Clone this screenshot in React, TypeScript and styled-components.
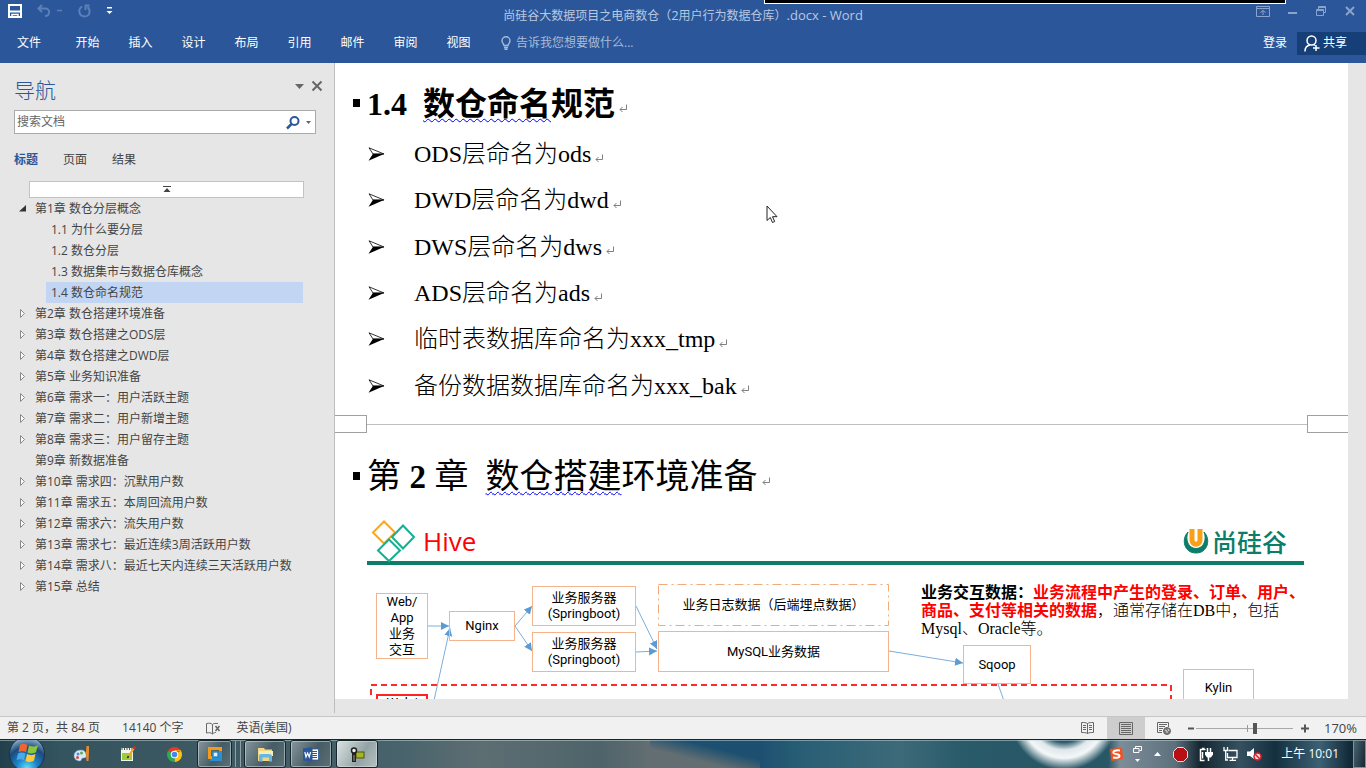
import React from "react";
import styled, { createGlobalStyle, css } from "styled-components";

const ui = `"Open Sans", "Noto Sans CJK SC", sans-serif`;
const serif = `"Liberation Serif", "Noto Sans CJK SC", serif`;
const blue = "#2b579a";

const GlobalStyle = createGlobalStyle`
  * { box-sizing: border-box; }
  html, body { margin: 0; height: 100%; overflow: hidden; }
  body { font: 12px/16px ${ui}; color: #444; background: #e6e6e6; }
  #root { height: 100%; }
  button { font: inherit; color: inherit; border: 0; padding: 0; background: none; display: flex; align-items: center; justify-content: center; white-space: nowrap; }
  a { color: inherit; text-decoration: none; }
  ul, h1, h2, p { margin: 0; padding: 0; list-style: none; font-weight: inherit; }
  svg { display: block; flex: none; overflow: visible; }
`;

const Window = styled.div`
  height: 100vh;
  display: flex;
  flex-direction: column;
  position: relative;
`;

/* ---------- title bar and ribbon tabs ---------- */
const Header = styled.header`
  background: ${blue};
  color: #fff;
  flex: none;
  height: 63px;
`;
const TitleBar = styled.div`
  display: grid;
  grid-template-columns: 1fr auto 1fr;
  align-items: center;
  height: 31px;
`;
const QuickAccess = styled.div`
  display: flex;
  align-items: center;
  height: 22px;
  align-self: start;
  padding-left: 8px;
  gap: 15px;
`;
const WindowTitle = styled.h1`
  color: #b9c8e0;
  font-size: 12px;
  span { font-size: 13px; }
`;
const WindowButtons = styled.div`
  display: flex;
  justify-content: flex-end;
  align-self: start;
  height: 22px;
  gap: 15px;
  padding-right: 9px;
  color: #8aa3ca;
  button { width: 14px; }
`;
const TabRow = styled.nav`
  display: flex;
  align-items: center;
  height: 24px;
`;
const RibbonTab = styled.button<{ $file?: boolean }>`
  width: ${(p) => (p.$file ? "58px" : "53px")};
  margin-right: ${(p) => (p.$file ? "3px" : "0")};
  height: 24px;
`;
const TellMe = styled.label`
  display: flex;
  align-items: center;
  gap: 5px;
  margin-left: 16px;
  color: #a9bbd9;
  input {
    width: 140px;
    border: 0;
    padding: 0;
    background: none;
    color: inherit;
    font: inherit;
    outline: 0;
  }
  input::placeholder { color: inherit; opacity: 1; }
`;
const Account = styled.div`
  display: flex;
  margin-left: auto;
  height: 23px;
`;
const SignIn = styled.button`
  padding-right: 10px;
`;
const Share = styled.button`
  background: #173f77;
  width: 69px;
  gap: 3px;
  padding-right: 12px;
`;
const RecorderEdge = styled.div`
  position: absolute;
  top: 0;
  right: 80px;
  width: 522px;
  height: 4px;
  background: #000;
  border: 1px solid #fff;
  border-top: 0;
`;

/* ---------- body ---------- */
const Body = styled.div`
  flex: 1;
  min-height: 0;
  display: flex;
  background: #e6e6e6;
  padding-bottom: 3px;
`;
const NavPane = styled.aside`
  width: 335px;
  flex: none;
  border-right: 1px solid #bdbdbd;
  padding-top: 13px;
`;
const PaneHead = styled.div`
  display: flex;
  align-items: flex-start;
  padding: 0 12px 0 14px;
  height: 34px;
  h2 { flex: 1; font-size: 21px; line-height: 28px; color: ${blue}; font-weight: 300; }
  button { height: 20px; margin-left: 8px; color: #666; }
`;
const SearchBox = styled.label`
  display: flex;
  align-items: center;
  margin: 0 18px 0 14px;
  height: 24px;
  padding: 0 4px 0 2px;
  background: #fff;
  border: 1px solid #ababab;
  gap: 6px;
  input {
    flex: 1;
    min-width: 0;
    border: 0;
    padding: 0;
    font: inherit;
    outline: 0;
    background: none;
  }
  input::placeholder { color: #666; opacity: 1; }
`;
const PaneTabs = styled.div`
  display: flex;
  gap: 25px;
  padding: 17px 14px 13px;
`;
const PaneTab = styled.button<{ $active?: boolean }>`
  line-height: 17px;
  color: ${(p) => (p.$active ? blue : "#444")};
  font-weight: ${(p) => (p.$active ? 700 : 400)};
`;
const JumpTop = styled.button`
  width: 275px;
  height: 17px;
  margin-left: 29px;
  background: #fff;
  border: 1px solid #c3c3c3;
`;
const Outline = styled.ul`
  width: 303px;
`;
const OutlineItem = styled.a<{ $child?: boolean; $active?: boolean }>`
  display: flex;
  align-items: center;
  height: 21px;
  margin-left: ${(p) => (p.$child ? "46px" : "19px")};
  padding-left: ${(p) => (p.$child ? "5px" : "0")};
  background: ${(p) => (p.$active ? "#c2d5f2" : "none")};
  white-space: nowrap;
`;
const Twist = styled.span`
  width: 16px;
  flex: none;
`;

/* ---------- document ---------- */
const DocArea = styled.main`
  flex: 1;
  min-width: 0;
  padding: 0 18px 14px 0;
  display: flex;
`;
const Page = styled.article`
  flex: 1;
  min-width: 0;
  overflow: hidden;
  background: #fff;
  color: #000;
  padding-top: 18px;
`;
const DocHeading = styled.h2<{ $chapter?: boolean }>`
  display: flex;
  align-items: center;
  padding-left: 18px;
  white-space: pre;
  font-family: ${serif};
  font-size: ${(p) => (p.$chapter ? "34px" : "32px")};
  line-height: ${(p) => (p.$chapter ? "50px" : "46px")};
  font-weight: ${(p) => (p.$chapter ? 400 : 700)};
  margin-top: ${(p) => (p.$chapter ? "19px" : "0")};
  b { font-size: 33px; }
`;
const Square = styled.span`
  width: 7px;
  height: 8px;
  margin: 0 7px 2px 0;
  background: #000;
`;
const Wavy = styled.span`
  text-decoration: underline wavy #00f 1px;
  text-decoration-skip-ink: none;
  text-underline-offset: 3px;
`;
const BulletList = styled.ul`
  display: flex;
  flex-direction: column;
  height: 278px;
  margin-top: 4px;
  padding-left: 33px;
  font: 300 24px/46px ${serif};
  li {
    flex: 1;
    display: flex;
    align-items: center;
    white-space: nowrap;
  }
  li > svg:first-child { margin-right: 29px; }
`;
const Mark = styled.svg`
  margin: 8px 0 0 4px;
`;
const PageBreak = styled.div`
  display: flex;
  align-items: center;
  margin-top: 6px;
`;
const Corner = styled.span<{ $right?: boolean }>`
  width: ${(p) => (p.$right ? "41px" : "32px")};
  height: 18px;
  border: 1px solid #a0a0a0;
  ${(p) => (p.$right ? "border-right: 0;" : "border-left: 0;")}
`;
const Rule = styled.span`
  flex: 1;
  height: 1px;
  background: #c0c0c0;
`;

/* ---------- embedded slide ---------- */
const Slide = styled.section`
  margin: 15px 0 0 32px;
  width: 937px;
  font-size: 13px;
`;
const SlideHead = styled.div`
  display: flex;
  align-items: center;
  height: 48px;
  border-bottom: 4px solid #0b7d68;
  padding: 3px 17px 0 5px;
  h2 { flex: 1; margin-left: 8px; font: 400 26px/40px "Open Sans", sans-serif; color: #f00; }
`;
const Brand = styled.div`
  display: flex;
  align-items: center;
  gap: 3px;
  color: #0b7d68;
  font: 500 25px/30px "Noto Sans CJK SC", sans-serif;
`;
const Canvas = styled.div`
  position: relative;
  height: 150px;
  > svg { position: absolute; left: 0; top: 0; }
`;
const Node = styled.div<{ $x: number; $y: number; $w: number; $h: number; $kind?: "log" | "red" }>`
  position: absolute;
  left: ${(p) => p.$x}px;
  top: ${(p) => p.$y}px;
  width: ${(p) => p.$w}px;
  height: ${(p) => p.$h}px;
  display: flex;
  align-items: center;
  justify-content: center;
  text-align: center;
  line-height: 16px;
  font-family: Roboto, "Noto Sans CJK SC", sans-serif;
  white-space: pre;
  border: 1px solid #f6b48c;
  ${(p) => p.$kind === "log" && css`border-color: transparent;`}
  ${(p) => p.$kind === "red" && css`border: 2px solid #f22; align-items: flex-start; line-height: 14px;`}
`;
const Note = styled.p`
  position: absolute;
  left: 554px;
  top: 19px;
  font: 300 16px/18px ${serif};
  white-space: nowrap;
  strong { font-weight: 700; }
  em { font-style: normal; font-weight: 700; color: #f00; }
`;
const Pointer = styled.svg`
  position: absolute;
  left: 766px;
  top: 205px;
`;

/* ---------- status bar ---------- */
const StatusBar = styled.footer`
  flex: none;
  height: 23px;
  display: flex;
  align-items: center;
  padding-left: 7px;
  background: #f1f1f1;
  border-top: 1px solid #c6c6c6;
  font-size: 12px;
  white-space: pre;
`;
const StatusItem = styled.button<{ $icon?: boolean }>`
  margin-right: ${(p) => (p.$icon ? "16px" : "22px")};
`;
const ViewControls = styled.div`
  display: flex;
  align-items: center;
  height: 100%;
  margin-left: auto;
  padding-right: 9px;
`;
const ViewButton = styled.button<{ $active?: boolean }>`
  width: 38px;
  height: 100%;
  background: ${(p) => (p.$active ? "#cdcdcd" : "none")};
`;
const ZoomSlider = styled.input`
  appearance: none;
  width: 97px;
  height: 12px;
  margin: 0 8px 0 1px;
  background:
    linear-gradient(#999, #999) 51px 50% / 1px 7px no-repeat,
    linear-gradient(#a8a8a8, #a8a8a8) 0 50% / 100% 1px no-repeat;
  &::-webkit-slider-thumb {
    appearance: none;
    width: 4px;
    height: 11px;
    background: #555;
  }
`;
const ZoomValue = styled.button`
  margin-left: 15px;
  font-size: 13px;
`;

/* ---------- taskbar ---------- */
const Taskbar = styled.div`
  flex: none;
  height: 29px;
  display: flex;
  align-items: center;
  overflow: hidden;
  border-top: 1px solid #16262f;
  box-shadow: inset 0 1px 0 rgba(200, 220, 225, 0.5);
  background:
    linear-gradient(90deg, transparent 1108px, #7b8d98 1120px, #5d717d 1175px, #14262f 1200px, #35505f 1240px, #14303f 1275px, #3c6074 1320px, #122a38 1350px),
    radial-gradient(circle at 1064px -24px, transparent 26px, #dfe8ec 34px, #f4f7f8 42px, transparent 54px),
    linear-gradient(to top right, #626e72 35%, #1d5070 65%) 650px 0 / 110px 100% no-repeat,
    linear-gradient(90deg, #22404c 0, #34545f 60px, #3f5a63 240px, #48636c 400px, #5d6e72 480px, #4e646a 600px, #626e72 650px, #1d5070 760px, #285e75 800px, #3d6a79 900px, #2a5b6a 960px, #285766 1040px);
`;
const StartButton = styled.button`
  width: 54px;
  margin-right: 5px;
`;
const TaskButton = styled.button<{ $framed?: boolean; $active?: boolean; $narrow?: boolean }>`
  width: ${(p) => (p.$framed ? (p.$narrow ? "35px" : "42px") : "46px")};
  height: 28px;
  ${(p) =>
    p.$framed &&
    css`
      border: 1px solid #16262d;
      border-radius: 3px;
      box-shadow: inset 0 0 0 1px rgba(220, 232, 235, 0.5);
      margin-right: 4px;
      background: ${p.$active ? "linear-gradient(120deg, #dbe3e3, #93a3a4 60%, #b5c1c1)" : "linear-gradient(120deg, #87989d, #465c64 55%, #5b7077)"};
    `}
`;
const StackEdge = styled.span`
  width: 6px;
  height: 26px;
  margin: 0 3px 0 -1px;
  border-left: 1px solid #8fa0a6;
  border-right: 1px solid #8fa0a6;
`;
const Tray = styled.div`
  display: flex;
  align-items: center;
  margin-left: auto;
  height: 100%;
  color: #fff;
`;
const TrayButton = styled.button<{ $w?: number }>`
  width: ${(p) => p.$w ?? 24}px;
`;
const Clock = styled.span`
  margin: 0 14px 0 15px;
  font-size: 12px;
`;
const ShowDesktop = styled.button`
  width: 13px;
  height: 100%;
  border: 1px solid #7d929c;
  background: linear-gradient(100deg, #4a6470, #142833);
`;

const ReturnMark = () => (
  <Mark width="9" height="9" viewBox="0 0 9 9" fill="none" stroke="#808080">
    <path d="M7.5 0.5V5.5H1M3.5 3L1 5.5L3.5 8" />
  </Mark>
);

const outline: { t: string; k?: "open" | "closed" | "leaf" | "child"; on?: boolean }[] = [
  { t: "第1章 数仓分层概念", k: "open" },
  { t: "1.1 为什么要分层", k: "child" },
  { t: "1.2 数仓分层", k: "child" },
  { t: "1.3 数据集市与数据仓库概念", k: "child" },
  { t: "1.4 数仓命名规范", k: "child", on: true },
  { t: "第2章 数仓搭建环境准备" },
  { t: "第3章 数仓搭建之ODS层" },
  { t: "第4章 数仓搭建之DWD层" },
  { t: "第5章 业务知识准备" },
  { t: "第6章 需求一：用户活跃主题" },
  { t: "第7章 需求二：用户新增主题" },
  { t: "第8章 需求三：用户留存主题" },
  { t: "第9章 新数据准备", k: "leaf" },
  { t: "第10章 需求四：沉默用户数" },
  { t: "第11章 需求五：本周回流用户数" },
  { t: "第12章 需求六：流失用户数" },
  { t: "第13章 需求七：最近连续3周活跃用户数" },
  { t: "第14章 需求八：最近七天内连续三天活跃用户数" },
  { t: "第15章 总结" },
];

const rules = [
  "ODS层命名为ods",
  "DWD层命名为dwd",
  "DWS层命名为dws",
  "ADS层命名为ads",
  "临时表数据库命名为xxx_tmp",
  "备份数据数据库命名为xxx_bak",
];

const arrows: [number, number, number, number][] = [
  [61, 61, 82, 61],
  [66, 140, 83, 63],
  [148, 61, 165, 41],
  [148, 61, 165, 86],
  [269, 41, 290, 84],
  [269, 87, 290, 86],
  [522, 86, 596, 98],
  [631, 119, 642, 150],
];

export default function App() {
  return (
    <Window>
      <GlobalStyle />
      <Header>
        <TitleBar>
          <QuickAccess>
            <button aria-label="保存">
              <svg width="14" height="14" viewBox="0 0 14 14" fill="none" stroke="#fff" strokeWidth="2">
                <path d="M1 1H13V13H1ZM1 7.5H13" />
                <path d="M4 13V10.500H10V13" strokeWidth="1.500" />
              </svg>
            </button>
            <button aria-label="撤消">
              <svg width="26" height="14" viewBox="0 0 26 14" fill="none" stroke="#5c7fb6" strokeWidth="2">
                <path d="M5 1L1.500 4.500L5 8M2 4.500H8C14 4.500 13 12 8 12" />
                <path d="M20 6.500H25" strokeWidth="1.500" />
              </svg>
            </button>
            <button aria-label="恢复">
              <svg width="13" height="14" viewBox="0 0 13 14" fill="none" stroke="#5c7fb6" strokeWidth="2">
                <path d="M4 2.500C-1 6 1.500 12.500 6.500 12.500C12 12.500 13 6 9.500 3M7 1.500H11.500M7.500 1V6" />
              </svg>
            </button>
            <button aria-label="自定义快速访问工具栏">
              <svg width="7" height="8" viewBox="0 0 7 8" fill="#fff">
                <path d="M1 0H6V1.500H1ZM0.500 4H6.500L3.500 7Z" />
              </svg>
            </button>
          </QuickAccess>
          <WindowTitle>
            尚硅谷大数据项目之电商数仓（<span>2</span>用户行为数据仓库）<span>.docx - Word</span>
          </WindowTitle>
          <WindowButtons>
            <button aria-label="功能区显示选项">
              <svg width="14" height="11" viewBox="0 0 14 11" fill="none" stroke="currentColor">
                <path d="M0.500 0.500H13.500V10.500H0.500ZM0.500 2.500H13.500M7 9V4.500M4.500 6.500L7 4.500L9.500 6.500" />
              </svg>
            </button>
            <button aria-label="最小化">
              <svg width="9" height="6" viewBox="0 0 9 6"><path d="M0 5H9" stroke="currentColor" strokeWidth="2" /></svg>
            </button>
            <button aria-label="还原">
              <svg width="10" height="10" viewBox="0 0 10 10" fill="none" stroke="currentColor">
                <path d="M0.500 3.500H7.500V9.500H0.500ZM0.500 4.500H7.500M2.500 3V0.500H9.500V6.500H8M2.500 1.500H9.500" />
              </svg>
            </button>
            <button aria-label="关闭">
              <svg width="10" height="10" viewBox="0 0 10 10"><path d="M1 1L9 9M9 1L1 9" stroke="currentColor" strokeWidth="2" /></svg>
            </button>
          </WindowButtons>
        </TitleBar>
        <TabRow>
          <RibbonTab $file>文件</RibbonTab>
          {["开始", "插入", "设计", "布局", "引用", "邮件", "审阅", "视图"].map((t) => (
            <RibbonTab key={t}>{t}</RibbonTab>
          ))}
          <TellMe>
            <svg width="10" height="14" viewBox="0 0 10 14" fill="none" stroke="currentColor" strokeWidth="1.4">
              <path d="M3 9.500C3 8 1 7 1 4.700A4 4 0 0 1 9 4.700C9 7 7 8 7 9.500ZM3 11.500H7M3.500 13.300H6.500" />
            </svg>
            <input aria-label="告诉我您想要做什么" placeholder="告诉我您想要做什么..." />
          </TellMe>
          <Account>
            <SignIn>登录</SignIn>
            <Share>
              <svg width="16" height="17" viewBox="0 0 16 17" fill="none" stroke="#fff" strokeWidth="1.500">
                <circle cx="7.500" cy="5.500" r="4.500" />
                <path d="M1 16.500C1 12.500 3 10.500 6 10M9.500 9.500L11 10.500M12 10V16M9 13H15.500" />
              </svg>
              共享
            </Share>
          </Account>
        </TabRow>
      </Header>

      <Body>
        <NavPane>
          <PaneHead>
            <h2>导航</h2>
            <button aria-label="任务窗格选项">
              <svg width="9" height="5" viewBox="0 0 9 5"><path d="M0 0H9L4.500 5Z" fill="currentColor" /></svg>
            </button>
            <button aria-label="关闭导航">
              <svg width="10" height="10" viewBox="0 0 10 10"><path d="M0.500 0.500L9.500 9.500M9.500 0.500L0.500 9.500" stroke="currentColor" strokeWidth="2" /></svg>
            </button>
          </PaneHead>
          <SearchBox>
            <input aria-label="搜索文档" placeholder="搜索文档" />
            <svg width="14" height="13" viewBox="0 0 14 13" fill="none" stroke={blue} strokeWidth="2">
              <circle cx="8.500" cy="5" r="4" />
              <path d="M5.500 8L1 12.500" strokeWidth="2.500" />
            </svg>
            <svg width="5" height="3" viewBox="0 0 5 3"><path d="M0 0H5L2.500 3Z" fill="#666" /></svg>
          </SearchBox>
          <PaneTabs>
            <PaneTab $active>标题</PaneTab>
            <PaneTab>页面</PaneTab>
            <PaneTab>结果</PaneTab>
          </PaneTabs>
          <JumpTop aria-label="跳转到开头">
            <svg width="8" height="7" viewBox="0 0 8 7" fill="#444"><path d="M0 0H8V1H0ZM4 2L7.500 6H0.500Z" /></svg>
          </JumpTop>
          <Outline>
            {outline.map(({ t, k = "closed", on }) => (
              <li key={t}>
                <OutlineItem href="#" $child={k === "child"} $active={on}>
                  {k !== "child" && (
                    <Twist>
                      {k === "open" && <svg width="7" height="7" viewBox="0 0 7 7"><path d="M7 0V6.500H0Z" fill="#333" /></svg>}
                      {k === "closed" && <svg width="7" height="9" viewBox="0 0 7 9"><path d="M1.500 0.500L5.500 4.500L1.500 8.500Z" fill="#fafafa" stroke="#8a8a8a" /></svg>}
                    </Twist>
                  )}
                  {t}
                </OutlineItem>
              </li>
            ))}
          </Outline>
        </NavPane>

        <DocArea>
          <Page>
            <DocHeading>
              <Square />
              {"1.4  "}
              <Wavy>数仓命名</Wavy>规范
              <ReturnMark />
            </DocHeading>
            <BulletList>
              {rules.map((t) => (
                <li key={t}>
                  <svg width="17" height="14" viewBox="0 0 17 14">
                    <path d="M1 0.800L16 7L5 7Z" fill="#fff" stroke="#000" strokeWidth="0.800" />
                    <path d="M16.500 6.800L0.500 13.800L5 6.800Z" fill="#000" />
                  </svg>
                  {t}
                  <ReturnMark />
                </li>
              ))}
            </BulletList>
            <PageBreak>
              <Corner />
              <Rule />
              <Corner $right />
            </PageBreak>
            <DocHeading $chapter>
              <Square />
              第 <b>2</b> 章{"  "}
              <Wavy>数仓搭建</Wavy>环境准备
              <ReturnMark />
            </DocHeading>

            <Slide>
              <SlideHead>
                <svg width="43" height="42" viewBox="0 0 43 42" fill="none" strokeWidth="2">
                  <path d="M12 1.500L23 12.500L12 23.500L1 12.500Z" stroke="#fba51b" />
                  <path d="M31 5.500L42 17L31 28.500L20 17Z" stroke="#12b094" fill="#fff" />
                  <path d="M17 19.500L28 30.500L17 41L6 30.500Z" stroke="#12b094" fill="#fff" />
                </svg>
                <h2>Hive</h2>
                <Brand>
                  <svg width="26" height="26" viewBox="0 0 26 26" fill="none">
                    <path d="M5 4C-2 11 1 25 13 25S28 11 21 4C24 11 21 20.500 13 20.500S2 11 5 4Z" fill="#0b7d68" stroke="#0b7d68" />
                    <path d="M9 1V12C9 17.500 17 17.500 17 12V1" stroke="#f9a01b" strokeWidth="5" />
                  </svg>
                  尚硅谷
                </Brand>
              </SlideHead>
              <Canvas>
                <svg width="937" height="150" viewBox="0 0 937 150" fill="none">
                  <defs>
                    <marker id="head" markerUnits="userSpaceOnUse" markerWidth="9" markerHeight="9" refX="8" refY="4" orient="auto">
                      <path d="M0 0L8 4L0 8Z" fill="#5b9bd5" />
                    </marker>
                  </defs>
                  <rect x="291.500" y="19.500" width="230" height="41" stroke="#f4a97b" strokeDasharray="9 4 2 4" />
                  <rect x="4" y="120" width="800" height="80" stroke="#ff2b2b" strokeWidth="2" strokeDasharray="6 4" />
                  {arrows.map(([a, b, c, d]) => (
                    <path key={`${a}-${b}-${d}`} d={`M${a} ${b}L${c} ${d}`} stroke="#7aaedd" markerEnd="url(#head)" />
                  ))}
                </svg>
                <Node $x={9} $y={28} $w={52} $h={66}>{"Web/\nApp\n业务\n交互"}</Node>
                <Node $x={82} $y={46} $w={66} $h={30}>Nginx</Node>
                <Node $x={165} $y={21} $w={104} $h={40}>{"业务服务器\n(Springboot)"}</Node>
                <Node $x={165} $y={67} $w={104} $h={40}>{"业务服务器\n(Springboot)"}</Node>
                <Node $x={291} $y={19} $w={231} $h={41} $kind="log">业务日志数据（后端埋点数据）</Node>
                <Node $x={291} $y={66} $w={231} $h={41}>MySQL业务数据</Node>
                <Node $x={596} $y={80} $w={68} $h={39}>Sqoop</Node>
                <Node $x={816} $y={104} $w={71} $h={38}>Kylin</Node>
                <Node $x={9} $y={129} $w={52} $h={40} $kind="red">Web/</Node>
                <Note>
                  <strong>业务交互数据：</strong>
                  <em>业务流程中产生的登录、订单、用户、<br />商品、支付等相关的数据</em>，通常存储在DB中，包括<br />
                  Mysql、Oracle等。
                </Note>
              </Canvas>
            </Slide>
          </Page>
        </DocArea>
      </Body>

      <StatusBar>
        <StatusItem>第 2 页，共 84 页</StatusItem>
        <StatusItem>14140 个字</StatusItem>
        <StatusItem $icon aria-label="校对">
          <svg width="15" height="13" viewBox="0 0 15 13" fill="none" stroke="#666">
            <path d="M6.500 2.500C5 1 3 1 0.500 1.500V11C3 10.500 5 10.500 6.500 12C8 10.500 9 10.500 10 10.500M6.500 2.500V12M6.500 2.500C8 1 9 1.500 12 1.500" />
            <path d="M9.500 4L13.500 9M13.500 4L9.500 9" strokeWidth="1.500" />
          </svg>
        </StatusItem>
        <StatusItem>英语(美国)</StatusItem>
        <ViewControls>
          <ViewButton aria-label="阅读视图">
            <svg width="13" height="12" viewBox="0 0 13 12" fill="none" stroke="#666">
              <path d="M6.500 1.500C5 0.500 3 0.500 0.500 0.500V10.500C3 10.500 5 10.500 6.500 11.500C8 10.500 10 10.500 12.500 10.500V0.500C10 0.500 8 0.500 6.500 1.500V11.500M2 3.500H5M2 5.500H5M2 7.500H5M8 3.500H11M8 5.500H11M8 7.500H11" />
            </svg>
          </ViewButton>
          <ViewButton $active aria-label="页面视图">
            <svg width="14" height="13" viewBox="0 0 14 13" fill="none" stroke="#666">
              <path d="M0.500 0.500H13.500V12.500H0.500ZM2 2.500H12M2 4.500H12M2 6.500H12M2 8.500H12M2 10.500H12" />
            </svg>
          </ViewButton>
          <ViewButton aria-label="Web 版式视图">
            <svg width="14" height="13" viewBox="0 0 14 13" fill="none" stroke="#666">
              <path d="M5 10.500H0.500V0.500H11.500V5M2 2.500H10M2 4.500H8M2 6.500H6M2 8.500H5" />
              <circle cx="10" cy="9" r="3.500" fill="#777" />
              <path d="M8 8L10 9L10 11M11 7L12 9" stroke="#ddd" />
            </svg>
          </ViewButton>
          <button aria-label="缩小">
            <svg width="12" height="9" viewBox="0 0 12 9"><path d="M5 4.500H11" stroke="#555" strokeWidth="2" /></svg>
          </button>
          <ZoomSlider type="range" aria-label="缩放" min="0" max="100" defaultValue="61" />
          <button aria-label="放大">
            <svg width="8" height="9" viewBox="0 0 8 9"><path d="M0 4.500H8M4 0.500V8.500" stroke="#555" strokeWidth="2" /></svg>
          </button>
          <ZoomValue>170%</ZoomValue>
        </ViewControls>
      </StatusBar>

      <Taskbar>
        <StartButton aria-label="开始菜单">
          <svg width="36" height="36" viewBox="0 0 36 36">
            <defs>
              <radialGradient id="orb" cx="50%" cy="90%" r="85%">
                <stop offset="0" stopColor="#5fe0ff" />
                <stop offset="0.350" stopColor="#1b83c8" />
                <stop offset="0.700" stopColor="#1c4a7c" />
                <stop offset="1" stopColor="#8fb3cc" />
              </radialGradient>
            </defs>
            <circle cx="18" cy="18" r="17.500" fill="url(#orb)" stroke="#16344a" />
            <path d="M11 9C14 7 16 8 18.500 9L17 16C15 15 12 15 9.500 16Z" fill="#f0652f" />
            <path d="M20 9.500C23 11 26 11 29 9L27 16C24 18 21 17.500 18.500 16.500Z" fill="#8cc63e" />
            <path d="M9 17.500C12 16 14 16.500 16.500 17.500L15 24C12 23 10 23 7.500 24Z" fill="#4aa9e8" />
            <path d="M18 18C21 19.500 24 19.500 26.500 18L25 24.500C22 26.500 19 26 16.500 25Z" fill="#fdc93a" />
          </svg>
        </StartButton>
        <TaskButton aria-label="画图">
          <svg width="16" height="16" viewBox="0 0 16 16">
            <path d="M7 4C2 4 0 7 0 10S3 15 6 15C8 15 7 12 9 12S13 12 12 8C11 5 10 4 7 4Z" fill="#dbeaf5" stroke="#6a9cc4" strokeWidth="0.600" />
            <circle cx="4" cy="8" r="1.500" fill="#4a90d9" /><circle cx="7.500" cy="7" r="1.500" fill="#58b04a" /><circle cx="3.500" cy="11.500" r="1.500" fill="#d94a3a" />
            <path d="M12.500 0H15V6L14.500 15H12.500L12 6Z" fill="#e8892c" />
          </svg>
        </TaskButton>
        <TaskButton aria-label="记事本">
          <svg width="16" height="16" viewBox="0 0 16 16">
            <rect x="1" y="2" width="12" height="13" fill="#f4f6e8" />
            <rect x="2" y="7" width="10" height="7" fill="#9ccc3d" />
            <path d="M2 1V4M4.500 1V4M7 1V4M9.500 1V4M12 1V4" stroke="#555" />
            <path d="M14 2L8 11" stroke="#f0a52c" strokeWidth="2.200" /><path d="M15 0.500L13.500 3" stroke="#c33" strokeWidth="2.200" />
            <path d="M8.500 10L7.500 12" stroke="#222" strokeWidth="1.500" />
          </svg>
        </TaskButton>
        <TaskButton aria-label="Chrome">
          <svg width="15" height="15" viewBox="0 0 16 16">
            <path d="M8 8L1.100 4A8 8 0 0 1 14.900 4Z" fill="#e33b2e" />
            <path d="M8 8L14.900 4A8 8 0 0 1 8 16Z" fill="#fbc116" />
            <path d="M8 8L8 16A8 8 0 0 1 1.100 4Z" fill="#2da94f" />
            <path d="M8 4H14.900" stroke="#fbc116" />
            <circle cx="8" cy="8" r="4" fill="#fff" /><circle cx="8" cy="8" r="3" fill="#4285f4" />
          </svg>
        </TaskButton>
        <TaskButton $framed $narrow aria-label="VMware">
          <svg width="14" height="14" viewBox="0 0 14 14" fill="none">
            <path d="M12.500 4V12.500H2" stroke="#2b8fd3" strokeWidth="3" />
            <path d="M9 1.500H1.500V10.500H4M5 1.500H12.500V4" stroke="#f59b1c" strokeWidth="3" />
            <rect x="5" y="5" width="5" height="5" fill="#e9eef0" stroke="#2b8fd3" strokeWidth="1.500" />
          </svg>
        </TaskButton>
        <StackEdge />
        <TaskButton $framed aria-label="资源管理器">
          <svg width="17" height="15" viewBox="0 0 17 15">
            <path d="M1 1H7L8 2.500H15V14H1Z" fill="#f3d681" />
            <path d="M2 4H16V9H2Z" fill="#fbeeb4" />
            <path d="M2 14.500V9C2 7 4 7 5 7H12C14 7 15 8 15 9V14.500H12V10.500H5.500V14.500Z" fill="#67b7e6" />
          </svg>
        </TaskButton>
        <TaskButton $framed aria-label="Word">
          <svg width="16" height="15" viewBox="0 0 16 15">
            <rect x="8" y="2" width="7.500" height="11" fill="#fff" stroke="#2b579a" strokeWidth="0.800" />
            <path d="M9 4.500H14M9 6.500H14M9 8.500H14M9 10.500H14" stroke="#2b579a" />
            <path d="M0 1.500L9.500 0V15L0 13.500Z" fill="#2b579a" />
            <path d="M1.800 5L3 10L4.600 6L6.200 10L7.600 5" fill="none" stroke="#fff" strokeWidth="1.200" />
          </svg>
        </TaskButton>
        <TaskButton $framed $active aria-label="录屏工具">
          <svg width="15" height="15" viewBox="0 0 15 15">
            <rect x="6" y="5" width="8" height="6" fill="#a5b61e" stroke="#4d5410" />
            <circle cx="4" cy="3.500" r="2.500" fill="#eee" stroke="#222" strokeWidth="1.500" />
            <path d="M4 6V15" stroke="#222" strokeWidth="4" /><path d="M4 8V14" stroke="#999" />
          </svg>
        </TaskButton>
        <Tray>
          <TrayButton $w={20} aria-label="搜狗输入法">
            <svg width="15" height="15" viewBox="0 0 15 15">
              <path d="M1 2L13 0.500L14 12L2.500 14Z" fill="#f4511e" />
              <path d="M11 3.500C7 3 4 4 4.500 6C5 7.500 10.500 6.500 10.500 9C10.500 11 7 11 4 10.500" fill="none" stroke="#fff" strokeWidth="2" />
            </svg>
          </TrayButton>
          <TrayButton $w={22} aria-label="语言栏">
            <svg width="9" height="17" viewBox="0 0 9 17" fill="none" stroke="#fff">
              <path d="M2.500 2V0.500H8.500V4.500H6.500M0.500 2.500H6V6.500H0.500Z" /><path d="M2 13H7L4.500 16Z" fill="#fff" stroke="none" />
            </svg>
          </TrayButton>
          <TrayButton $w={18} aria-label="显示隐藏的图标">
            <svg width="7" height="4" viewBox="0 0 7 4"><path d="M3.500 0L7 4H0Z" fill="#fff" /></svg>
          </TrayButton>
          <TrayButton $w={28} aria-label="录制中">
            <svg width="15" height="15" viewBox="0 0 15 15"><path d="M4.500 0.500H10.500L14.500 4.500V10.500L10.500 14.500H4.500L0.500 10.500V4.500Z" fill="#b80f14" stroke="#f3dada" /></svg>
          </TrayButton>
          <TrayButton aria-label="电源">
            <svg width="14" height="15" viewBox="0 0 14 15" fill="none" stroke="#fff">
              <path d="M5.500 13.500H1.500V2.500H6.500M3 1.500H5.500" strokeWidth="1.500" />
              <path d="M3.500 5V11.500" strokeWidth="1.500" />
              <path d="M8.500 1V5M11.500 1V5M9.500 10V14" strokeWidth="1.500" />
              <path d="M6 5H14V7.500L12 10.500H8L6 7.500Z" fill="#fff" stroke="none" />
            </svg>
          </TrayButton>
          <TrayButton aria-label="网络">
            <svg width="15" height="14" viewBox="0 0 15 14" fill="none" stroke="#fff" strokeWidth="1.300">
              <path d="M5.500 3.500H14V10.500H4.500V6M6.500 13.300H13M9.500 11V13M1 0V3.500H4.500V0M2.700 3.500V13H5" />
            </svg>
          </TrayButton>
          <TrayButton aria-label="音量">
            <svg width="15" height="14" viewBox="0 0 15 14">
              <path d="M0 4.500H3L7 1V12L3 9H0Z" fill="#fff" /><circle cx="10.500" cy="9.500" r="3.500" fill="#f5dede" stroke="#d8202a" strokeWidth="1.500" /><path d="M8 7L13 12" stroke="#d8202a" strokeWidth="1.500" />
            </svg>
          </TrayButton>
          <Clock>上午 10:01</Clock>
          <ShowDesktop aria-label="显示桌面" />
        </Tray>
      </Taskbar>

      <RecorderEdge />
      <Pointer width="12" height="19" viewBox="0 0 12 19">
        <path d="M1 1V15.500L4.300 12.500L6.500 17.500L8.700 16.500L6.500 11.700H11Z" fill="#fff" stroke="#222" />
      </Pointer>
    </Window>
  );
}
